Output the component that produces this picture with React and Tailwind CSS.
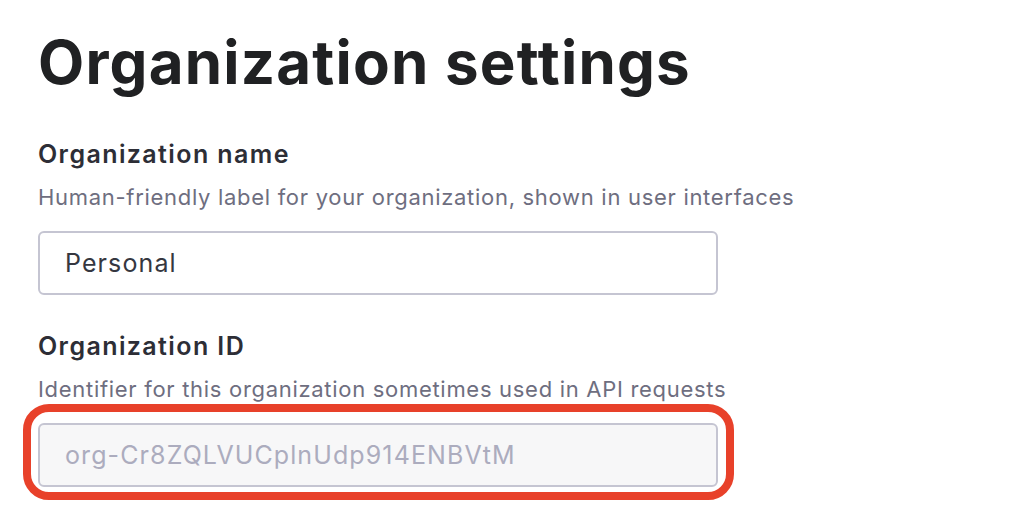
import React from "react";

const Field = ({ label, hint, value, readOnly, highlight }) => (
  <div className="flex flex-col">
    <label className="text-[25px] leading-[30px] font-semibold text-[#2d2e36] tracking-[1.4px]">
      {label}
    </label>
    <p className="mt-[14px] text-[22px] leading-[28px] text-[#6e6e80] tracking-[0.7px]">
      {hint}
    </p>
    <div className="relative mt-[20px] w-[680px]">
      {highlight && (
        <div className="absolute -left-[15px] -top-[19px] -right-[16px] -bottom-[13px] rounded-[26px] border-[8px] border-[#e8412a] pointer-events-none" />
      )}
      <input
        type="text"
        defaultValue={value}
        readOnly={readOnly}
        className={`w-full h-[64px] px-[25px] rounded-[6px] border-2 border-[#c5c5d2] text-[25px] tracking-[1.1px] outline-none ${
          readOnly ? "bg-[#f7f7f8] text-[#acacbe]" : "bg-white text-[#353740]"
        }`}
      />
    </div>
  </div>
);

export default function App() {
  return (
    <div
      className="min-h-[532px] bg-white pl-[38px] pt-[26px]"
      style={{ fontFamily: "Inter, 'Noto Sans', sans-serif" }}
    >
      <h1 className="text-[60px] leading-[72px] font-bold text-[#202123] tracking-[1.2px]">
        Organization settings
      </h1>

      <div className="mt-[41px]">
        <Field
          label="Organization name"
          hint="Human-friendly label for your organization, shown in user interfaces"
          value="Personal"
        />
      </div>

      <div className="mt-[36px]">
        <Field
          label="Organization ID"
          hint="Identifier for this organization sometimes used in API requests"
          value="org-Cr8ZQLVUCplnUdp914ENBVtM"
          readOnly
          highlight
        />
      </div>
    </div>
  );
}
